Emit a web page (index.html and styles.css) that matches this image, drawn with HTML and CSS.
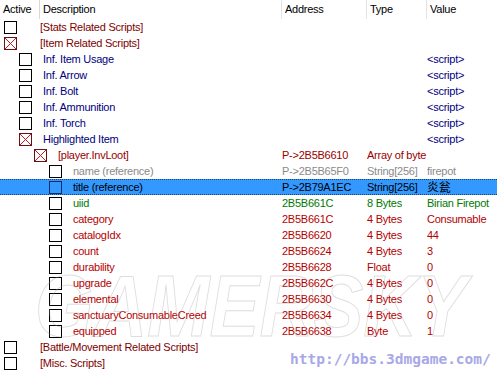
FILE: index.html
```html
<!DOCTYPE html>
<html>
<head>
<meta charset="utf-8">
<link rel="stylesheet" href="styles.css">
</head>
<body>
<div class="table">
  <div class="header">
    <div class="h h-active">Active</div>
    <div class="h h-desc">Description</div>
    <div class="h h-addr">Address</div>
    <div class="h h-type">Type</div>
    <div class="h h-val">Value</div>
  </div>

  <div class="row c-group"><div class="tree l0"><span class="box"></span><span class="txt">[Stats Related Scripts]</span></div><div class="cell"></div><div class="cell"></div><div class="cell"></div></div>
  <div class="row c-group"><div class="tree l0"><span class="box x"></span><span class="txt">[Item Related Scripts]</span></div><div class="cell"></div><div class="cell"></div><div class="cell"></div></div>
  <div class="row c-navy"><div class="tree l1"><span class="box"></span><span class="txt">Inf. Item Usage</span></div><div class="cell"></div><div class="cell"></div><div class="cell">&lt;script&gt;</div></div>
  <div class="row c-navy"><div class="tree l1"><span class="box"></span><span class="txt">Inf. Arrow</span></div><div class="cell"></div><div class="cell"></div><div class="cell">&lt;script&gt;</div></div>
  <div class="row c-navy"><div class="tree l1"><span class="box"></span><span class="txt">Inf. Bolt</span></div><div class="cell"></div><div class="cell"></div><div class="cell">&lt;script&gt;</div></div>
  <div class="row c-navy"><div class="tree l1"><span class="box"></span><span class="txt">Inf. Ammunition</span></div><div class="cell"></div><div class="cell"></div><div class="cell">&lt;script&gt;</div></div>
  <div class="row c-navy"><div class="tree l1"><span class="box"></span><span class="txt">Inf. Torch</span></div><div class="cell"></div><div class="cell"></div><div class="cell">&lt;script&gt;</div></div>
  <div class="row c-navy"><div class="tree l1"><span class="box x"></span><span class="txt">Highlighted Item</span></div><div class="cell"></div><div class="cell"></div><div class="cell">&lt;script&gt;</div></div>
  <div class="row c-player"><div class="tree l2"><span class="box x"></span><span class="txt">[player.InvLoot]</span></div><div class="cell">P-&gt;2B5B6610</div><div class="cell">Array of byte</div><div class="cell"></div></div>
  <div class="row c-gray"><div class="tree l3"><span class="box"></span><span class="txt">name (reference)</span></div><div class="cell">P-&gt;2B5B65F0</div><div class="cell">String[256]</div><div class="cell">firepot</div></div>
  <div class="row selected"><div class="tree l3"><span class="box"></span><span class="txt">title (reference)</span></div><div class="cell">P-&gt;2B79A1EC</div><div class="cell">String[256]</div><div class="cell cjk">炎瓮</div></div>
  <div class="row c-green"><div class="tree l3"><span class="box"></span><span class="txt">uiid</span></div><div class="cell">2B5B661C</div><div class="cell">8 Bytes</div><div class="cell">Birian Firepot</div></div>
  <div class="row c-red"><div class="tree l3"><span class="box"></span><span class="txt">category</span></div><div class="cell">2B5B661C</div><div class="cell">4 Bytes</div><div class="cell">Consumable</div></div>
  <div class="row c-red"><div class="tree l3"><span class="box"></span><span class="txt">catalogIdx</span></div><div class="cell">2B5B6620</div><div class="cell">4 Bytes</div><div class="cell">44</div></div>
  <div class="row c-red"><div class="tree l3"><span class="box"></span><span class="txt">count</span></div><div class="cell">2B5B6624</div><div class="cell">4 Bytes</div><div class="cell">3</div></div>
  <div class="row c-red"><div class="tree l3"><span class="box"></span><span class="txt">durability</span></div><div class="cell">2B5B6628</div><div class="cell">Float</div><div class="cell">0</div></div>
  <div class="row c-red"><div class="tree l3"><span class="box"></span><span class="txt">upgrade</span></div><div class="cell">2B5B662C</div><div class="cell">4 Bytes</div><div class="cell">0</div></div>
  <div class="row c-red"><div class="tree l3"><span class="box"></span><span class="txt">elemental</span></div><div class="cell">2B5B6630</div><div class="cell">4 Bytes</div><div class="cell">0</div></div>
  <div class="row c-red"><div class="tree l3"><span class="box"></span><span class="txt">sanctuaryConsumableCreed</span></div><div class="cell">2B5B6634</div><div class="cell">4 Bytes</div><div class="cell">0</div></div>
  <div class="row c-red"><div class="tree l3"><span class="box"></span><span class="txt">equipped</span></div><div class="cell">2B5B6638</div><div class="cell">Byte</div><div class="cell">1</div></div>
  <div class="row c-group"><div class="tree l0"><span class="box"></span><span class="txt">[Battle/Movement Related Scripts]</span></div><div class="cell"></div><div class="cell"></div><div class="cell"></div></div>
  <div class="row c-group"><div class="tree l0"><span class="box"></span><span class="txt">[Misc. Scripts]</span></div><div class="cell"></div><div class="cell"></div><div class="cell"></div></div>

  <div class="wm-gamersky">GAMERSKY</div>
  <div class="wm-url">http://bbs.3dmgame.com/</div>
</div>
</body>
</html>
```
FILE: styles.css
```css
html, body {
  margin: 0;
  padding: 0;
  background: #fff;
}
body {
  width: 497px;
  height: 374px;
  overflow: hidden;
  font-family: "Liberation Sans", Arial, sans-serif;
  font-size: 11px;
  letter-spacing: -0.25px;
}
.table {
  position: relative;
  width: 497px;
  height: 374px;
  overflow: hidden;
}
.header {
  display: grid;
  grid-template-columns: 40px 242px 85px 60px 1fr;
  height: 19px;
  color: #000;
}
.h {
  line-height: 19px;
  padding-left: 3px;
  border-right: 1px solid #e3e3e3;
  white-space: nowrap;
}
.h-active { padding-left: 3px; border-right-color: #d8d8d8; }
.h-val { border-right: none; }
.row {
  display: grid;
  grid-template-columns: 282px 85px 60px 1fr;
  height: 16px;
  line-height: 16px;
  white-space: nowrap;
  box-sizing: border-box;
}
.cell {
  padding-left: 0;
  overflow: hidden;
}
.tree {
  display: flex;
  align-items: center;
}
.box {
  width: 11px;
  height: 11px;
  border: 1px solid #000;
  flex: none;
  position: relative;
}
.box.x {
  border-color: #6b1010;
  background:
    linear-gradient(to top right, transparent calc(50% - 0.6px), #c02020 calc(50% - 0.6px), #c02020 calc(50% + 0.6px), transparent calc(50% + 0.6px)),
    linear-gradient(to bottom right, transparent calc(50% - 0.6px), #c02020 calc(50% - 0.6px), #c02020 calc(50% + 0.6px), transparent calc(50% + 0.6px));
}
.txt { margin-left: 11px; }
.l0 { padding-left: 4px; }
.l0 .txt { margin-left: 23px; }
.l1 { padding-left: 19px; }
.l2 { padding-left: 34px; }
.l3 { padding-left: 49px; }

.c-group { color: #800000; }
.c-navy { color: #000080; }
.c-player { color: #990000; }
.c-gray { color: #8a8a8a; }
.c-green { color: #007a00; }
.c-red { color: #b40000; }

.selected {
  background: #3399ff;
  color: #000;
  border-top: 1px dotted #1a3f80;
  border-bottom: 1px dotted #1a3f80;
  line-height: 14px;
}
.selected .box { border-color: #0b2a66; }
.selected .cell { overflow: visible; }
.cjk {
  font-family: "Noto Sans CJK SC", "Liberation Sans", sans-serif;
  font-size: 12px;
  line-height: 14px;
  height: 14px;
}

.wm-gamersky {
  position: absolute;
  left: 35px;
  top: 262px;
  font-family: "Liberation Sans", sans-serif;
  font-weight: bold;
  font-style: italic;
  font-size: 88px;
  line-height: 88px;
  letter-spacing: 0;
  transform: scaleX(0.85);
  transform-origin: left top;
  color: transparent;
  -webkit-text-stroke: 1px rgba(160,160,160,0.35);
  pointer-events: none;
  white-space: nowrap;
}
.wm-url {
  position: absolute;
  left: 290px;
  top: 351px;
  font-family: "DejaVu Sans Mono", monospace;
  font-weight: bold;
  font-size: 14.5px;
  letter-spacing: 0;
  color: #a8a8e6;
  white-space: nowrap;
}
```
